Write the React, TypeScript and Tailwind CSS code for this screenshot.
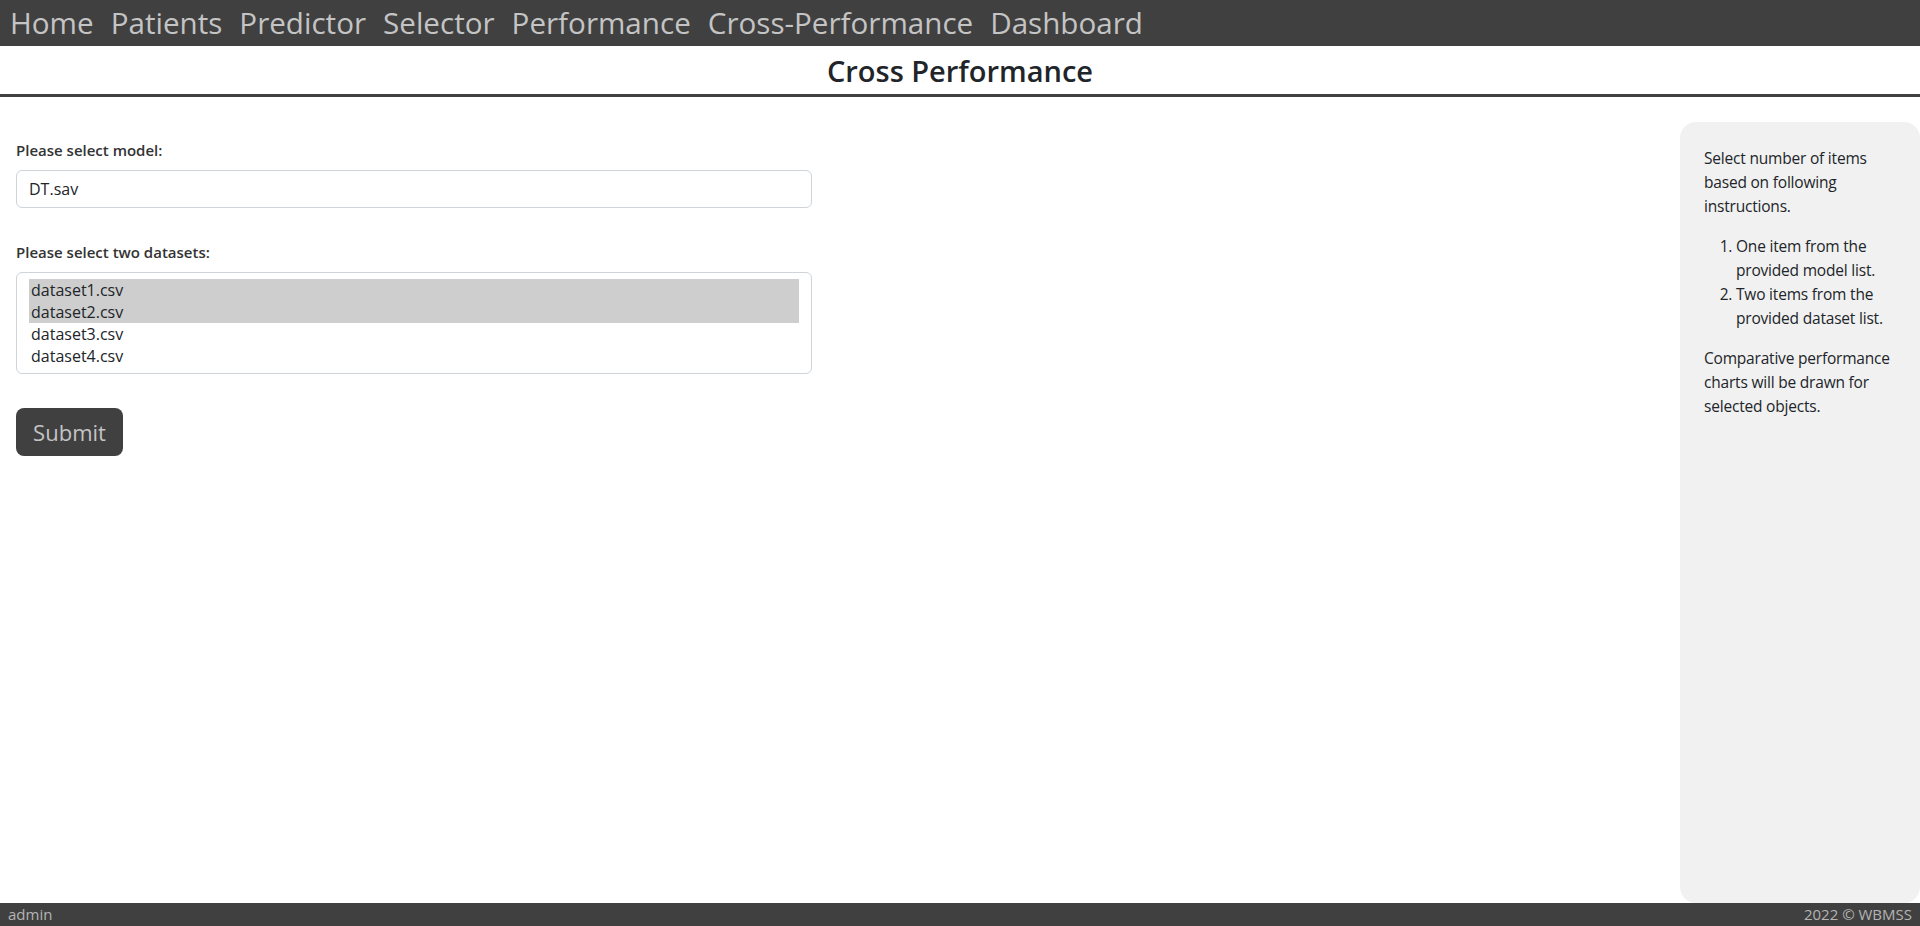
import React from 'react';

const navItems = ['Home', 'Patients', 'Predictor', 'Selector', 'Performance', 'Cross-Performance', 'Dashboard'];
const datasets = ['dataset1.csv', 'dataset2.csv', 'dataset3.csv', 'dataset4.csv'];
const selected = ['dataset1.csv', 'dataset2.csv'];

const App = () => {
  return (
    <div className="flex flex-col h-[926px] bg-white text-[#212529] font-['Open_Sans',sans-serif]">
      <nav className="h-[46px] shrink-0 bg-[#404040] flex items-center pl-[10px] gap-[17px]">
        {navItems.map((item) => (
          <a key={item} className="text-[#c4c4c4] text-[29.6px] leading-none cursor-pointer hover:text-white">
            {item}
          </a>
        ))}
      </nav>

      <header className="h-[51px] shrink-0 flex items-center justify-center border-b-[3px] border-[#404040]">
        <h3 className="text-[29px] font-semibold leading-tight mt-[2px]">Cross Performance</h3>
      </header>

      <main className="flex-1 flex justify-between pl-4 pt-[25px] min-h-0">
        <form className="w-[796px] pt-[16px]">
          <label className="block text-[15px] font-semibold text-[#333] leading-6 mb-[8px]">Please select model:</label>
          <div className="h-[38px] border border-[#ced4da] rounded-md px-3 flex items-center text-[16px]">DT.sav</div>

          <label className="block text-[15px] font-semibold text-[#333] leading-6 mt-[32px] mb-[8px]">Please select two datasets:</label>
          <div className="border border-[#ced4da] rounded-md px-3 pt-[6px] pb-[6px]">
            {datasets.map((d) => (
              <div
                key={d}
                className={`h-[22px] leading-[22px] px-[2px] text-[16px] ${selected.includes(d) ? 'bg-[#cecece]' : ''}`}
              >
                {d}
              </div>
            ))}
          </div>

          <button
            type="button"
            className="mt-[34px] h-[48px] w-[107px] rounded-lg bg-[#404040] text-[#c4c4c4] text-[22px]"
          >
            Submit
          </button>
        </form>

        <aside className="w-[240px] bg-[#f1f1f1] rounded-2xl p-6 text-[15.5px] tracking-[-0.2px] leading-6">
          <p className="mb-4">Select number of items based on following instructions.</p>
          <ol className="list-decimal pl-8 mb-4">
            <li>One item from the provided model list.</li>
            <li>Two items from the provided dataset list.</li>
          </ol>
          <p>Comparative performance charts will be drawn for selected objects.</p>
        </aside>
      </main>

      <footer className="h-[23px] shrink-0 bg-[#404040] flex items-center justify-between px-2 text-[15px] text-[#b4b4b4]">
        <span>admin</span>
        <span>2022 © WBMSS</span>
      </footer>
    </div>
  );
};

export default App;
